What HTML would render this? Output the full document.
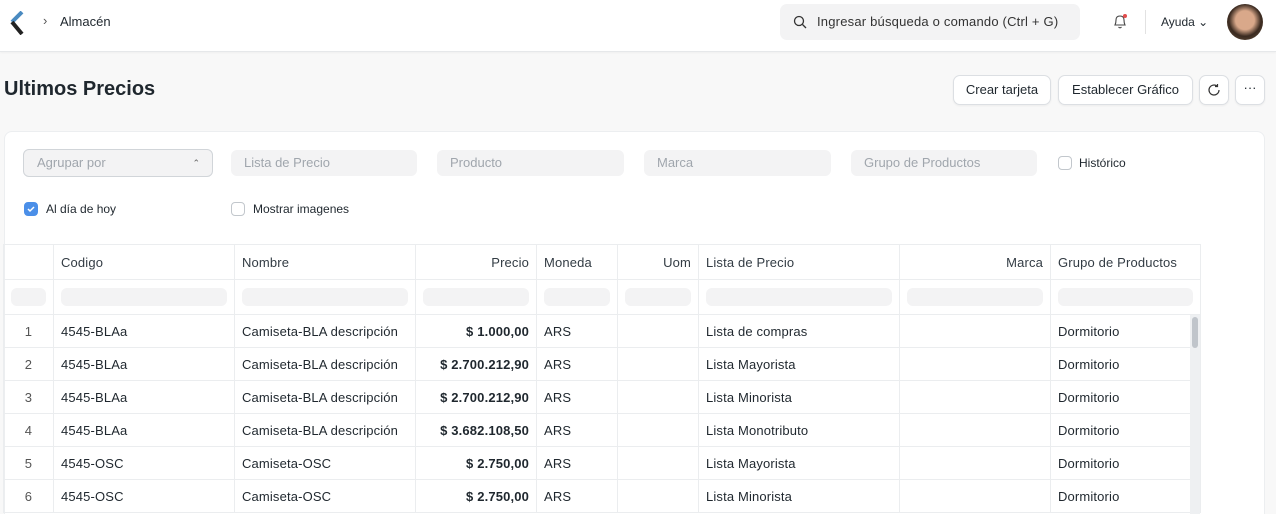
<!DOCTYPE html>
<html><head><meta charset="utf-8"><style>
*{box-sizing:border-box;margin:0;padding:0}
html,body{width:1276px;height:514px;overflow:hidden}
body{background:#f8f8f8;font-family:"Liberation Sans",sans-serif;color:#1f272e;font-size:13px;position:relative}
.nav{position:absolute;left:0;top:0;width:1276px;height:52px;background:#fff;border-bottom:1px solid #e6e8ea;box-shadow:0 1px 2px rgba(0,0,0,.04)}
.abs{position:absolute}
.search{left:780px;top:4px;width:300px;height:36px;background:#f3f3f4;border-radius:7px}
.btn{position:absolute;top:75px;height:30px;background:#fff;border:1px solid #dcdfe3;border-radius:7px;font-size:13px;line-height:28px;text-align:center;box-shadow:0 1px 2px rgba(0,0,0,.05)}
.card{left:4px;top:131px;width:1261px;height:400px;background:#fff;border:1px solid #eceef0;border-radius:8px}
.inp{position:absolute;top:150px;height:26px;background:#f3f3f4;border-radius:6px;color:#a0a6ad;font-size:13px;line-height:26px;padding-left:13px}
.cb{position:absolute;width:14px;height:14px;border:1px solid #c2c7cc;border-radius:4px;background:#fff}
table{position:absolute;left:3px;top:244px;border-collapse:collapse;table-layout:fixed}
td{border:1px solid #ebedef;height:33px;padding:0 7px;font-size:13px;white-space:nowrap;overflow:hidden;letter-spacing:.15px}
tr.h td{height:35px;color:#333c44}
tr.f td{height:35px;padding:0 7px}
.fb{height:18px;background:#f3f3f4;border-radius:6px}
.r{text-align:right}
.b{font-weight:bold}
.n{text-align:center;color:#555}
</style></head><body>
<div class="nav">
<svg class="abs" style="left:9px;top:11px" width="16" height="24" viewBox="0 0 16 24"><path d="M13 1 L3 11" stroke="#4a8ac0" stroke-width="4"/><path d="M3 11 L13 23" stroke="#222" stroke-width="4"/></svg>
<div class="abs" style="left:43px;top:13px;font-size:13px;color:#555">›</div>
<div class="abs" style="left:60px;top:14px;font-size:13px">Almacén</div>
<div class="abs search"><svg class="abs" style="left:13px;top:11px" width="14" height="14" viewBox="0 0 14 14"><circle cx="6" cy="6" r="4.5" fill="none" stroke="#333" stroke-width="1.3"/><path d="M9.5 9.5 L13 13" stroke="#333" stroke-width="1.3"/></svg><div class="abs" style="left:37px;top:10px;font-size:13px;color:#333;letter-spacing:.2px">Ingresar búsqueda o comando (Ctrl + G)</div></div>
<svg class="abs" style="left:1111px;top:12px" width="18" height="18" viewBox="0 0 18 18"><path d="M4 13 Q5 11 5 8 Q5 4 9 4 Q13 4 13 8 Q13 11 14 13 Z M7.5 15 Q9 16.5 10.5 15" fill="none" stroke="#444" stroke-width="1.1"/><circle cx="14" cy="4" r="2" fill="#e24c4c"/></svg>
<div class="abs" style="left:1145px;top:10px;width:1px;height:24px;background:#e2e2e2"></div>
<div class="abs" style="left:1161px;top:15px;font-size:12px">Ayuda ⌄</div>
<div class="abs" style="left:1227px;top:4px;width:36px;height:36px;border-radius:50%;background:radial-gradient(circle at 50% 45%,#d9a88a 0 35%,#3a2a20 60%,#6b5540 100%)"></div>
</div>
<div class="abs" style="left:4px;top:78px;font-size:20px;font-weight:bold">Ultimos Precios</div>
<div class="btn" style="left:953px;width:98px">Crear tarjeta</div>
<div class="btn" style="left:1058px;width:135px">Establecer Gráfico</div>
<div class="btn" style="left:1199px;width:30px"><svg style="margin-top:7px" width="14" height="14" viewBox="0 0 14 14"><path d="M12 7 A5 5 0 1 1 10 3 M10.5 1 V3.5 H8" fill="none" stroke="#333" stroke-width="1.2"/></svg></div>
<div class="btn" style="left:1235px;width:30px;line-height:24px">···</div>
<div class="abs card"></div>
<div class="inp" style="left:23px;top:149px;width:190px;height:28px;border:1px solid #d1d5d9;line-height:26px">Agrupar por<span style="position:absolute;right:12px;font-size:9px;color:#666">⌃</span></div>
<div class="inp" style="left:231px;width:186px">Lista de Precio</div>
<div class="inp" style="left:437px;width:187px">Producto</div>
<div class="inp" style="left:644px;width:187px">Marca</div>
<div class="inp" style="left:851px;width:186px">Grupo de Productos</div>
<div class="cb" style="left:1058px;top:156px"></div>
<div class="abs" style="left:1079px;top:156px;font-size:12px">Histórico</div>
<div class="cb" style="left:24px;top:202px;background:#4b8fe8;border-color:#4b8fe8"><svg style="position:absolute;left:1px;top:1px" width="10" height="10" viewBox="0 0 10 10"><path d="M2 5 L4 7 L8 3" fill="none" stroke="#fff" stroke-width="1.5"/></svg></div>
<div class="abs" style="left:46px;top:202px;font-size:12px">Al día de hoy</div>
<div class="cb" style="left:231px;top:202px"></div>
<div class="abs" style="left:253px;top:202px;font-size:12px">Mostrar imagenes</div>
<table>
<colgroup><col style="width:50px"><col style="width:181px"><col style="width:181px"><col style="width:121px"><col style="width:81px"><col style="width:81px"><col style="width:201px"><col style="width:151px"><col style="width:150px"></colgroup>
<tr class="h"><td></td><td>Codigo</td><td>Nombre</td><td class="r">Precio</td><td>Moneda</td><td class="r">Uom</td><td>Lista de Precio</td><td class="r">Marca</td><td>Grupo de Productos</td></tr>
<tr class="f"><td><div class="fb"></div></td><td><div class="fb"></div></td><td><div class="fb"></div></td><td><div class="fb"></div></td><td><div class="fb"></div></td><td><div class="fb"></div></td><td><div class="fb"></div></td><td><div class="fb"></div></td><td><div class="fb"></div></td></tr>
<tr><td class="n">1</td><td>4545-BLAa</td><td>Camiseta-BLA descripción</td><td class="r b">$ 1.000,00</td><td>ARS</td><td></td><td>Lista de compras</td><td></td><td>Dormitorio</td></tr>
<tr><td class="n">2</td><td>4545-BLAa</td><td>Camiseta-BLA descripción</td><td class="r b">$ 2.700.212,90</td><td>ARS</td><td></td><td>Lista Mayorista</td><td></td><td>Dormitorio</td></tr>
<tr><td class="n">3</td><td>4545-BLAa</td><td>Camiseta-BLA descripción</td><td class="r b">$ 2.700.212,90</td><td>ARS</td><td></td><td>Lista Minorista</td><td></td><td>Dormitorio</td></tr>
<tr><td class="n">4</td><td>4545-BLAa</td><td>Camiseta-BLA descripción</td><td class="r b">$ 3.682.108,50</td><td>ARS</td><td></td><td>Lista Monotributo</td><td></td><td>Dormitorio</td></tr>
<tr><td class="n">5</td><td>4545-OSC</td><td>Camiseta-OSC</td><td class="r b">$ 2.750,00</td><td>ARS</td><td></td><td>Lista Mayorista</td><td></td><td>Dormitorio</td></tr>
<tr><td class="n">6</td><td>4545-OSC</td><td>Camiseta-OSC</td><td class="r b">$ 2.750,00</td><td>ARS</td><td></td><td>Lista Minorista</td><td></td><td>Dormitorio</td></tr>
</table>
<div class="abs" style="left:1190px;top:315px;width:10px;height:200px;background:#eef0f2"></div>
<div class="abs" style="left:1192px;top:317px;width:6px;height:31px;background:#c0c5cb;border-radius:3px"></div>
</body></html>
